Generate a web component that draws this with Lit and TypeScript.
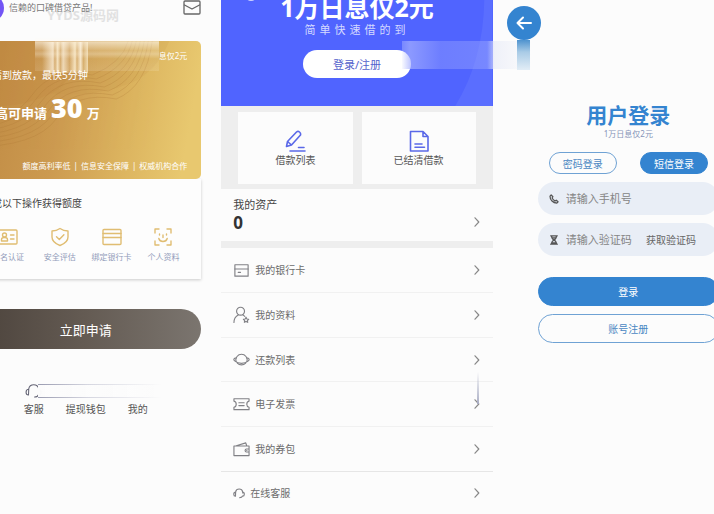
import { LitElement, html, css, svg } from "lit";
import { customElement } from "lit/decorators.js";

const icon = (cls: string, box: string, body: unknown) =>
  html`<svg class="icon ${cls}" viewBox=${box} aria-hidden="true">${body}</svg>`;

const chevron = () => icon("chevron", "0 0 6 10", svg`<path d="M1 .8 4.8 5 1 9.2"/>`);

const headset = svg`<path d="M3.500 8V6.500a4.800 4.800 0 0 1 9.400 0V8M3.500 6.800C1.700 6.800 1 8.300 1 9.600s.8 2.600 2.300 2.600zM12.800 6.800c1.600 0 2.300 1.500 2.300 2.800s-.8 2.600-2.300 2.600M12.700 12c-.6 1.500-1.800 2.200-3.700 2.200"/>`;

@customElement("loan-home")
export class LoanHome extends LitElement {
  static styles = css`
    :host { display: block; min-width: 0; }
    * { box-sizing: border-box; }
    .icon { fill: none; stroke: currentColor; display: block; stroke-linecap: round; stroke-linejoin: round; }
    .screen { padding: 0 20px; }
    .head { position: relative; display: flex; align-items: center; height: 41px; padding-bottom: 25px; color: #777; }
    .avatar { width: 28px; height: 28px; margin: 0 5px 0 6px; border-radius: 50%; background: #7355f5; flex: none; }
    .slogan { flex: 1; font-size: 9px; line-height: 14px; white-space: nowrap; }
    .mail { width: 18px; height: 16px; color: #666; }
    .mark { position: absolute; left: 77px; top: 6px; font-size: 13px; line-height: 18px; font-weight: 700; color: #bbb; opacity: .4; white-space: nowrap; }
    .gold { position: relative; height: 138px; padding: 0 14px 0 12px; border-radius: 5px; color: #fff;
      background: linear-gradient(100deg, #c18c45 10%, #cc9a50 40%, #dcb45f 68%, #e8c86f 92%); }
    .waves { position: absolute; inset: 0; width: 100%; height: 100%; border-radius: 5px; }
    .glare { position: absolute; left: 65px; right: 42px; top: -4px; height: 34px;
      background: linear-gradient(#fffaf000, #fffaf099 16%, #fffaf033 40%, #fffaf055 50%, #fffaf011 64%, #fffaf022); }
    .bars { position: absolute; left: 72px; top: 1px; width: 46px; height: 31px;
      background: linear-gradient(90deg, #fff3d800, #fff6e4bb 24%, #fff3d833 28%, #fff3d8cc 34%, #fff3d833 40%, #fff6e4aa 46%, #fff3d822 60%, #fff3d8cc 72%, #fff3d833 76%, #fff6e4cc 84%, #fff3d822 90%, #fff3d8aa); }
    .rate { position: relative; margin: 0; padding-top: 8px; text-align: right; font-size: 8px; line-height: 14px; clip-path: inset(0 0 0 calc(100% - 28px)); }
    .fast { position: relative; margin: 4px 0 0; font-size: 10px; line-height: 16px; white-space: nowrap; }
    .amount { position: relative; display: flex; align-items: baseline; gap: 4px; margin: 7px 0 0; font-size: 13px; line-height: 36px; font-weight: 700; white-space: nowrap; }
    .amount strong { font-size: 27px; }
    .perks { position: relative; display: flex; justify-content: flex-end; margin: 28px 0 0; font-size: 8px; line-height: 14px; white-space: nowrap; }
    .perks span + span::before { content: "|"; padding: 0 3px; }
    .steps { height: 100px; padding: 16px 12px 0; background: #fdfdfd; box-shadow: 0 1px 3px #0003; }
    .steps h2 { margin: 0; font-size: 10px; font-weight: 400; line-height: 16px; color: #444; }
    .items { display: grid; grid-template-columns: repeat(4, 1fr); margin: 16px 0 0; padding: 0; list-style: none; }
    .item { display: flex; flex-direction: column; align-items: center; gap: 3px; font-size: 8px; line-height: 14px; color: #929cba; white-space: nowrap; }
    .item .icon { width: 20px; height: 20px; color: #e0bd72; stroke-width: 1.400; }
    .apply { display: block; width: 100%; height: 40px; margin-top: 30px; border: 0; border-radius: 20px; font-family: inherit; font-size: 13px; color: #fff;
      background: linear-gradient(90deg, #4b423b, #645b53 50%, #7b756f); }
    .nav { position: relative; display: grid; grid-template-columns: repeat(3, 52px); justify-content: center; margin-top: 32px; }
    .nav a { display: flex; flex-direction: column; justify-content: flex-end; align-items: center; gap: 2px; height: 36px; font-size: 10px; line-height: 16px; color: #555; text-decoration: none; }
    .nav .icon { width: 17px; height: 17px; color: #667; }
    .streak { position: absolute; left: 68px; right: 40px; top: 3px; height: 14px; background: linear-gradient(90deg, #fcfcfc, #fcfcfc00);
      border: 1px solid; border-width: 1px 0; border-image: linear-gradient(90deg, #999bb0, #d5d6e0 40%, #fcfcfc00) 1; }
  `;

  render() {
    const tools = [
      ["实名认证", svg`<rect x="1" y="3" width="18" height="14" rx="1"/><circle cx="6.500" cy="8" r="2"/><path d="M3.500 14v-1.500q0-2 3-2t3 2V14zM12.500 8H16M12.500 12H16"/>`],
      ["安全评估", svg`<path d="M10 1.500Q13.500 4 18 4v6q0 5.500-8 8.500-8-3-8-8.500V4q4.500 0 8-2.500z"/><path d="m6.500 9.800 2.800 2.700 4.600-4.800"/>`],
      ["绑定银行卡", svg`<rect x="1" y="2.500" width="18" height="15" rx="1"/><path d="M1 6.500h18M1 10.500h18"/>`],
      ["个人资料", svg`<path d="M2 6V2h4M14 2h4v4M18 14v4h-4M6 18H2v-4M6.500 7v1M13.500 7v1M10 8v2.500M5.800 11.500q.8 3 4.200 3t4.200-3"/>`],
    ] as const;
    return html`
      <section class="screen">
        <header class="head">
          <span class="avatar"></span>
          <span class="slogan">信赖的口碑借贷产品!</span>
          ${icon("mail", "0 0 18 16", svg`<rect x="1" y="1" width="16" height="13" rx="1" stroke-width="1.300"/><path d="m1.500 5 7.500 4L16.500 5" stroke-width="1.300"/>`)}
          <span class="mark">YYDS源码网</span>
        </header>
        <div class="gold">
          <svg class="waves" viewBox="0 0 231 138" preserveAspectRatio="none" aria-hidden="true">
            <path d="M0 0h105q2 38-23 52Q48 70 0 64z" fill="#b97f3b" opacity=".16"/>
            <path d="M105 0q-2 36-24 52 42 5 80-10 26-12 38-42z" fill="#bd8840" opacity=".12"/>
            <g fill="none" stroke="#a97330" stroke-width=".6" opacity=".4">
              ${[0, 4, 8, 12, 16, 20, 24].map((d) => svg`<path d="M0 ${82 + d}Q${42 + d} ${82 + d} ${62 + d} ${54 + d}T${122 + d} ${34 + d}Q${152 + d} ${22 + d} ${158 + d} 0"/>`)}
            </g>
          </svg>
          <span class="glare"></span><span class="bars"></span>
          <p class="rate">1万日息仅2元</p>
          <p class="fast">申请到放款，最快5分钟</p>
          <p class="amount">最高可申请 <strong>30</strong> 万</p>
          <p class="perks"><span>额度高利率低</span><span>信息安全保障</span><span>权威机构合作</span></p>
        </div>
        <div class="steps">
          <h2>完成以下操作获得额度</h2>
          <ul class="items">
            ${tools.map(([label, art]) => html`<li class="item">${icon("", "0 0 20 20", art)}${label}</li>`)}
          </ul>
        </div>
        <button class="apply">立即申请</button>
        <nav class="nav">
          <a href="#service">${icon("", "0 0 16 16", headset)}客服</a>
          <a href="#wallet">提现钱包</a>
          <a href="#mine">我的</a>
          <span class="streak"></span>
        </nav>
      </section>`;
  }
}

@customElement("loan-account")
export class LoanAccount extends LitElement {
  static styles = css`
    :host { display: block; min-width: 0; }
    * { box-sizing: border-box; }
    .icon { fill: none; stroke: currentColor; display: block; stroke-linecap: round; stroke-linejoin: round; flex: none; }
    .screen { position: relative; display: flex; flex-direction: column; min-height: 100vh; }
    .hero { position: relative; display: flex; flex-direction: column; align-items: center; height: 106px; overflow: hidden; background: #5064ff; color: #fff; }
    .shape { position: absolute; inset: 0; width: 100%; height: 100%; }
    .hero h1 { position: relative; margin: -8px 0 0; font-size: 25px; line-height: 31px; white-space: nowrap; }
    .hero p { position: relative; margin: 0; font-size: 11px; line-height: 14px; letter-spacing: 4px; color: #d5daff; white-space: nowrap; }
    .sign { position: relative; width: 108px; height: 28px; margin-top: 13px; border: 0; border-radius: 14px; background: #fff; color: #5362cc; font-family: inherit; font-size: 11px; }
    .smear { position: absolute; left: 181px; right: -38px; top: 41px; height: 28px;
      background: linear-gradient(90deg, #e9ecff44, #aab4ffaa 6%, #8794ff88 30%, #a3aeff66 66%, #e8ebf7aa 72%, #f3f4fa00); }
    .tiles { display: grid; grid-template-columns: 1fr 1fr; gap: 9px; padding: 6px 17px 5px; background: #eee; }
    .tile { display: flex; flex-direction: column; align-items: center; height: 72px; padding-top: 18px; background: #fcfcfc; color: #555; font-size: 10px; line-height: 16px; text-decoration: none; }
    .tile .icon { width: 22px; height: 22px; color: #5a68e8; stroke-width: 1.600; }
    .assets { display: flex; align-items: flex-end; justify-content: space-between; height: 52px; padding: 8px 13px 8px 12px; color: #444; text-decoration: none; font-size: 11px; line-height: 16px; }
    .assets strong { display: block; font-size: 17px; line-height: 20px; color: #333; }
    .chevron { width: 6px; height: 10px; color: #888; stroke-width: 1.200; }
    .assets .chevron { margin-bottom: 6px; }
    .band { height: 7px; background: #eee; }
    .list { flex: 1; display: flex; flex-direction: column; margin: 0; padding: 0; list-style: none; }
    .list li { flex: 1; min-height: 40px; display: flex; border-bottom: 1px solid #f1f1f1; }
    .list li:last-child { border: 0; }
    .list li:nth-child(5) { border-color: #e6e6e6; }
    .row { flex: 1; display: flex; align-items: center; gap: 5px; padding: 0 13px 0 12px; font-size: 10px; line-height: 16px; color: #6b6b6b; text-decoration: none; }
    .row span { flex: 1; }
    .kind { width: 17px; height: 18px; color: #808085; stroke-width: 1.200; }
    .small { width: 12px; height: 12px; stroke-width: 1.500; }
    .line { position: absolute; right: 14px; bottom: 110px; width: 2px; height: 32px; background: linear-gradient(#b9bccf00, #a9adc4); }
  `;

  render() {
    const rows = [
      ["我的银行卡", svg`<rect x="2" y="3.500" width="14" height="12"/><path d="M2 8h14M5.500 11.500h2.500"/>`],
      ["我的资料", svg`<circle cx="8" cy="5" r="4.200"/><path d="M1 17q0-5.500 4.500-8M10.500 8.800l2 1.700"/><path d="m13.800 11.500.9 1.700 1.900.3-1.400 1.400.4 1.900-1.800-.9-1.800.9.4-1.900-1.400-1.400 1.900-.3z"/>`],
      ["还款列表", svg`<path d="M3.200 10.500a6 6 0 1 1 11.600 0M4.600 12.300a6 6 0 0 0 8.800 0"/><path d="M3.500 6.800C.8 7 .2 8.400 1.800 9.900c1.700 1.600 4.600 2.700 7.200 2.700s5.500-1.100 7.200-2.700c1.600-1.500 1-2.900-1.700-3.100"/>`],
      ["电子发票", svg`<path d="M1 3.500h16V6q-2.400.6-2.400 3.200T17 12.500V15H1v-2.500q2.400-.6 2.400-3.300T1 6zM6.200 7.700h5.600M6.200 10.700h5.600"/>`],
      ["我的券包", svg`<path d="M1 5.800h16v10.200H1zM3.500 5.600 13.500 2.500l1 3.100M17 9h-2.700q-1.500 0-1.500 1.600t1.500 1.600H17M14.500 10.600h.3"/>`],
      ["在线客服", null],
    ] as const;
    return html`
      <section class="screen">
        <header class="hero">
          <svg class="shape" viewBox="0 0 271 106" preserveAspectRatio="none" aria-hidden="true">
            <path d="M271 0v106h-37q28-46 29-106z" fill="#5d70ff" opacity=".8"/>
            <ellipse cx="30" cy="-2" rx="4" ry="3" fill="#cdd3ff"/>
          </svg>
          <h1>1万日息仅2元</h1>
          <p>简单快速借的到</p>
          <button class="sign">登录/注册</button>
        </header>
        <div class="tiles">
          <a class="tile" href="#loans">${icon("", "0 0 22 22", svg`<path d="m2.500 16.500 1-5 9-9.500q1.500-1.200 3 0t1 3l-9 10zM3.500 11.500l4 3.500M14.500 17.500H20M6 21h15"/>`)}借款列表</a>
          <a class="tile" href="#settled">${icon("", "0 0 22 22", svg`<path d="M2.500 1.500H15l5 5v14.500H2.500zM15 1.500v5h5M7 14h7M7 17.200h9.500"/>`)}已结清借款</a>
        </div>
        <a class="assets" href="#assets"><span>我的资产<strong>0</strong></span>${chevron()}</a>
        <div class="band"></div>
        <ul class="list">
          ${rows.map(([label, art]) => html`<li><a class="row" href="#item">
            ${art ? icon("kind", "0 0 18 18", art) : icon("kind small", "0 0 16 16", headset)}
            <span>${label}</span>${chevron()}</a></li>`)}
        </ul>
        <span class="smear"></span>
        <span class="line"></span>
      </section>`;
  }
}

@customElement("loan-login")
export class LoanLogin extends LitElement {
  static styles = css`
    :host { display: block; min-width: 0; }
    * { box-sizing: border-box; }
    button, input { font-family: inherit; font-size: 10px; margin: 0; }
    .icon { fill: none; stroke: currentColor; display: block; stroke-linecap: round; stroke-linejoin: round; flex: none; }
    .screen { padding: 6px 45px 0; }
    .back { position: relative; display: grid; place-items: center; width: 34px; height: 34px; margin-left: -31px; padding: 0; border: 0; border-radius: 50%; background: #3484d0; color: #fff; }
    .back .icon { width: 16px; height: 16px; stroke-width: 2; }
    .back::after { content: ""; position: absolute; left: 10px; top: 34px; width: 13px; height: 30px; background: linear-gradient(#4f93cf, #a9cbe6 40%, #e2edf6); }
    h1 { margin: 60px 0 0; font-size: 21px; line-height: 30px; text-align: center; color: #3484d0; }
    .sub { margin: 0; text-align: center; font-size: 8px; line-height: 8px; color: #8593b8; }
    .tabs { display: flex; justify-content: space-between; padding: 0 11px; margin-top: 14px; }
    .tab { width: 68px; height: 22px; padding: 0; border: 1px solid #6fa2d4; border-radius: 11px; background: #fcfcfc; color: #4a87c2; }
    .tab.on { background: #3484d0; border-color: #3484d0; color: #fff; }
    .field { display: flex; align-items: center; gap: 7px; height: 33px; margin-top: 8px; padding: 0 23px 0 11px; border-radius: 17px; background: #e9eef6; color: #555; }
    .field .icon { width: 10px; height: 10px; stroke-width: 1.500; }
    .field input { flex: 1; min-width: 0; padding: 0; border: 0; outline: 0; background: none; font-size: 11px; color: #555; }
    .field input::placeholder { color: #858585; opacity: 1; }
    .code { flex: none; padding: 0; border: 0; background: none; color: #666; }
    .main { display: block; width: 100%; height: 29px; border: 1px solid #3484d0; border-radius: 15px; background: #3484d0; color: #fff; }
    .field + .main { margin-top: 21px; }
    .plain { margin-top: 8px; background: #fcfcfc; border-color: #6fa2d4; color: #4a87c2; }
  `;

  render() {
    return html`
      <section class="screen">
        <button class="back" aria-label="返回">${icon("", "0 0 16 16", svg`<path d="M15 8H1.500M7 2.500 1.500 8 7 13.500"/>`)}</button>
        <h1>用户登录</h1>
        <p class="sub">1万日息仅2元</p>
        <div class="tabs"><button class="tab">密码登录</button><button class="tab on">短信登录</button></div>
        <label class="field">
          ${icon("", "0 0 12 12", svg`<path d="M2.600 1.200 1.200 2.600Q1.200 6 3.600 8.400T9.400 10.800l1.500-1.400-2.200-2-1.500 1Q4.800 7 3.700 4.800l1-1.500z"/>`)}
          <input type="tel" placeholder="请输入手机号" aria-label="手机号" />
        </label>
        <div class="field">
          ${icon("", "0 0 12 12", svg`<path d="M2 1h8M2 11h8M3 1q0 3.500 3 5-3 1.500-3 5M9 1q0 3.500-3 5 3 1.500 3 5M4.500 3.500h3M4.500 9.500h3"/>`)}
          <input placeholder="请输入验证码" aria-label="验证码" />
          <button class="code">获取验证码</button>
        </div>
        <button class="main">登录</button>
        <button class="main plain">账号注册</button>
      </section>`;
  }
}

@customElement("app-root")
export class AppRoot extends LitElement {
  static styles = css`
    :host { display: block; min-height: 100vh; overflow: hidden; background: #fcfcfc; font-family: "Noto Sans", "Noto Sans CJK SC", sans-serif; }
    .board { display: grid; grid-template-columns: repeat(3, 1fr); width: 114vw; margin-left: -7vw; }
  `;
  render() {
    return html`<main class="board">
      <loan-home></loan-home><loan-account></loan-account><loan-login></loan-login>
    </main>`;
  }
}
